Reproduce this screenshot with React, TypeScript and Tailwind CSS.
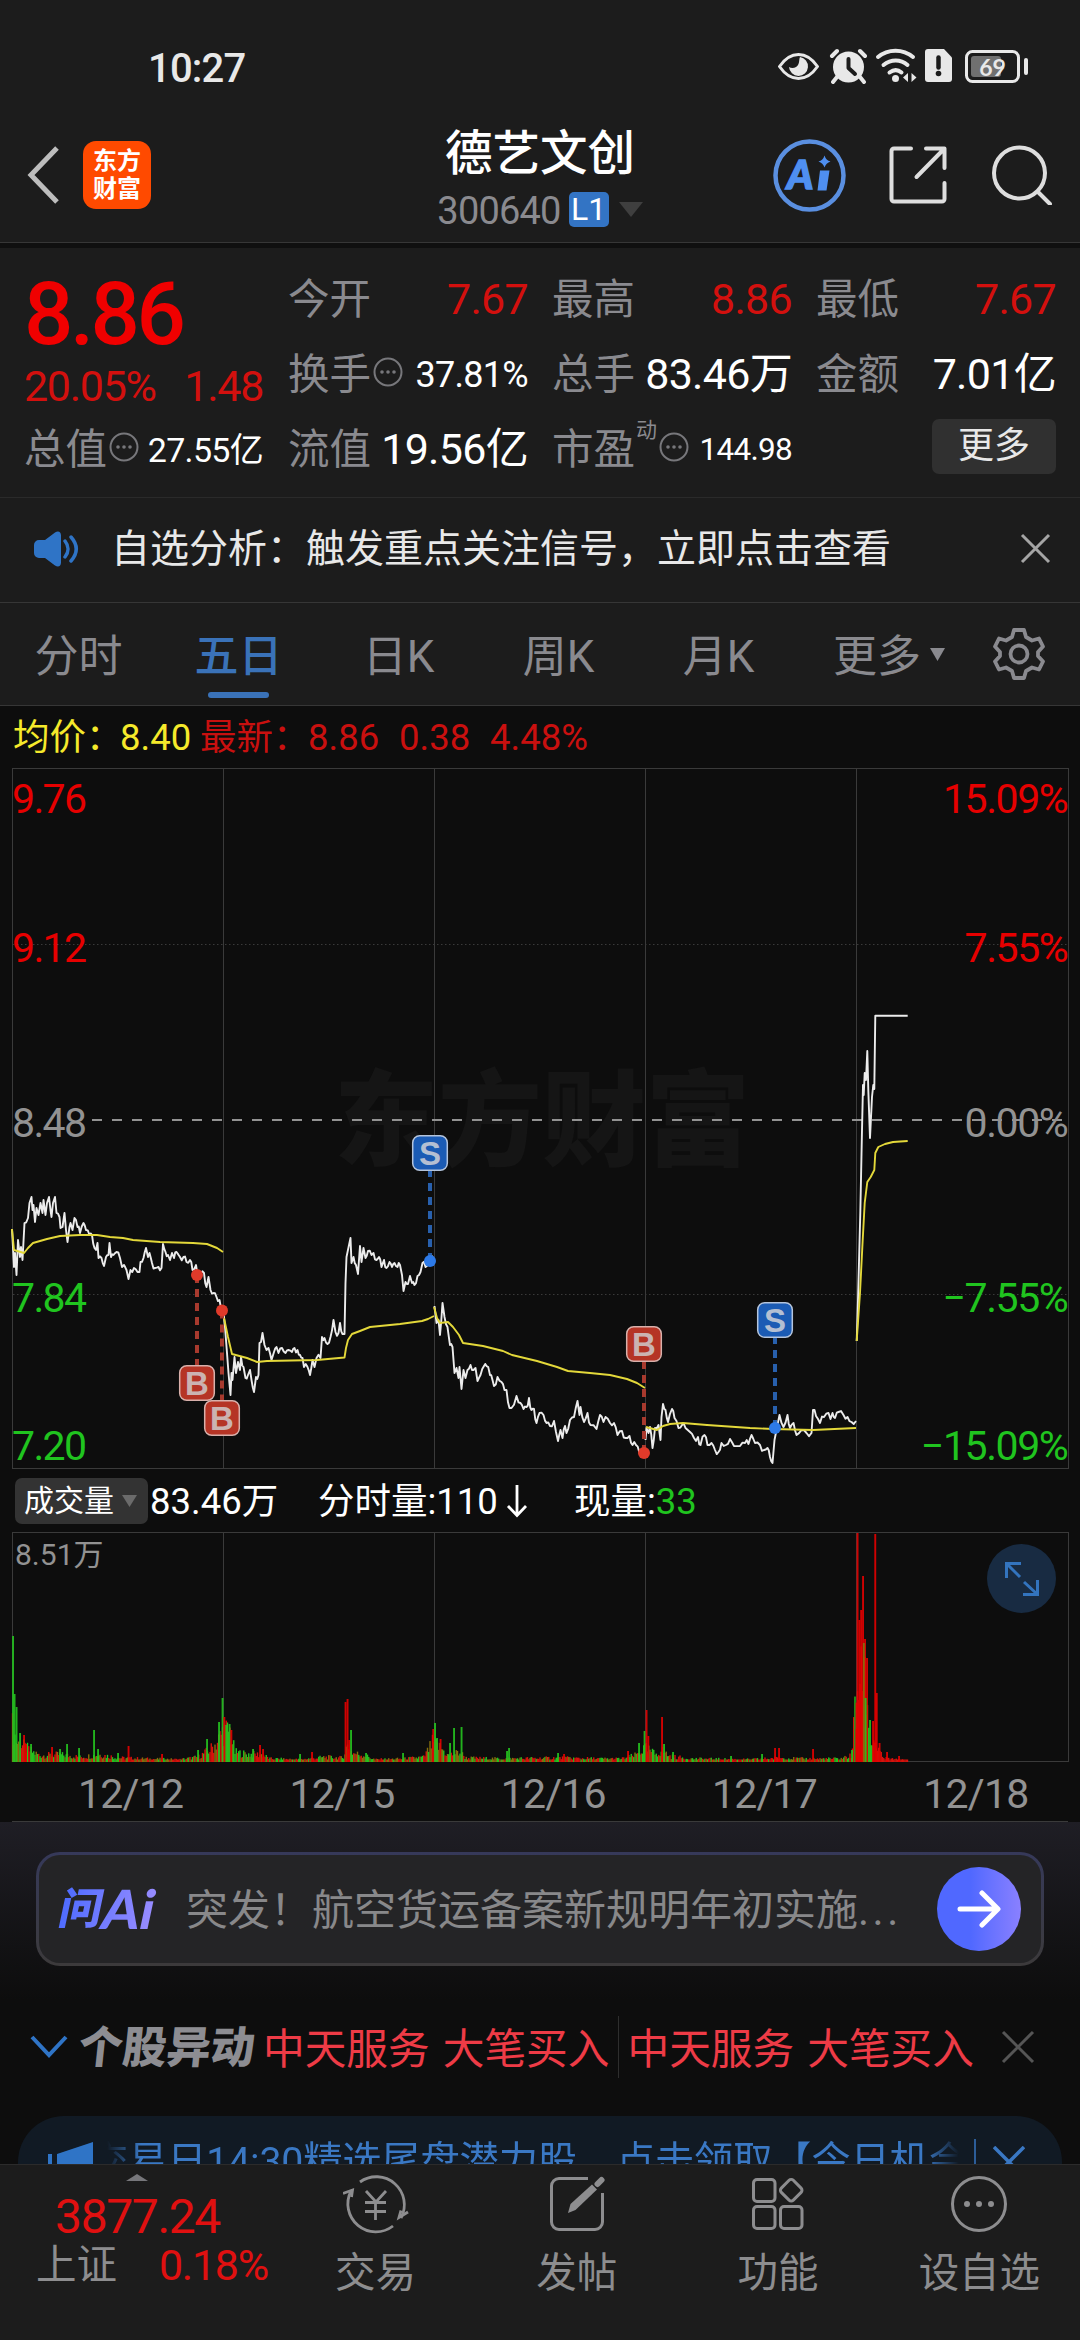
import { Fragment } from 'react';

const BORDER = '#3a3a3a';

// Intraday price, one "x,y x,y ..." list per trading day
const priceDays = [
  '12,1229 14,1267 15,1253 16.5,1275 18,1240 20,1257 21,1247 22.5,1260 24.5,1223 28,1218 29.5,1203 31.5,1197 32.5,1210 33.5,1205 35,1222 36.5,1208 38.5,1215 40.5,1203 42.5,1213 43.5,1200 45.5,1215 47,1203 49,1197 50.5,1210 51.5,1217 53,1203 55,1197 56.5,1213 59.5,1217 60.5,1228 62.5,1227 64.5,1213 66,1230 67.5,1242 69.5,1227 70.5,1223 72.5,1230 74.5,1218 77.5,1227 80,1233 83.5,1223 86,1230 89.5,1235 92,1235 94.5,1248 96,1250 97.5,1243 98.5,1258 101.5,1258 104,1266 106,1257 108.5,1255 109.5,1243 111,1257 113.5,1255 116.5,1252 120,1258 122,1267 124,1265 126.5,1270 128.5,1279 130.5,1270 134,1268 137.5,1272 139.5,1272 140.5,1262 143.5,1258 146,1248 148,1257 149.5,1253 152,1263 155,1268 158.5,1267 161.5,1268 163,1244 165.5,1252 168,1255 170,1260 172,1253 174,1258 176.5,1252 180,1257 183.5,1257 186.5,1262 190,1260 192.5,1270 196,1265 198.5,1275 201,1273 204,1273 206.5,1287 208.5,1277 210.5,1290 213.5,1293 216.5,1297 219.5,1300 222,1310',
  '223.5,1312 225,1327 227,1353 228.5,1373 230.5,1395 231.5,1373 232.5,1380 234.5,1357 236,1373 238,1362 240,1370 241,1357 243.5,1367 245.5,1378 248,1375 250,1370 251.5,1380 254,1392 256,1377 258.5,1375 259.5,1343 261,1342 262.5,1333 264.5,1345 266.5,1350 268.5,1348 271.5,1360 274,1352 276.5,1347 278.5,1353 282,1348 285.5,1353 288.5,1350 292,1352 294.5,1348 297.5,1350 300,1355 302.5,1358 304,1367 307.5,1367 310,1375 312.5,1360 314.5,1367 316.5,1358 320.5,1358 322,1337 324.5,1338 327.5,1344 330.5,1337 333.5,1320 335.5,1332 338.5,1333 340,1323 342.5,1334 344.5,1334 345.5,1283 346.5,1257 350.5,1238 351.5,1263 353.5,1257 356,1265 358,1274 360,1246 361.5,1262 363.5,1248 365.5,1258 368,1251 371.5,1255 373.5,1253 376.5,1260 379,1257 381.5,1267 384,1260 386.5,1268 389.5,1262 392,1267 394.5,1263 397.5,1267 400,1265 402,1275 403.5,1291 405.5,1282 408,1284 410,1276 412,1283 414.5,1285 417.5,1276 420.5,1272 422.5,1263 425.5,1267 430,1261 433,1256',
  '434.5,1306 436.5,1323 438.5,1320 440,1335 442.5,1303 444.5,1317 447.5,1327 450,1345 452.5,1347 454.5,1373 456.5,1368 458.5,1378 459.5,1367 461.5,1389 463.5,1370 465.5,1378 467.5,1370 470.5,1365 473.5,1370 475.5,1368 477.5,1381 480.5,1375 484,1366 486.5,1366 490,1375 492.5,1380 494,1386 497.5,1377 501.5,1382 504.5,1390 506.5,1390 509.5,1408 511.5,1408 516.5,1396 520.5,1403 523.5,1409 526.5,1407 529,1398 531.5,1410 534,1409 536.5,1423 539.5,1413 543.5,1415 546.5,1423 550,1426 554,1421 558,1441 560.5,1430 562.5,1438 565,1426 566.5,1433 570,1420 574,1417 577.5,1401 579.5,1415 580.5,1407 584,1422 587.5,1413 590.5,1425 596.5,1429 600,1415 603.5,1422 605.5,1417 610,1423 614,1423 617.5,1435 622,1431 625.5,1438 629.5,1436 632.5,1445 636,1445 639.5,1453 644,1453',
  '645.5,1440 646.5,1428 648.5,1433 650,1427 652.5,1448 655,1428 658.5,1425 660.5,1440 661.5,1417 663,1404 665.5,1410 668,1422 672,1409 674.5,1418 678.5,1428 682,1425 685.5,1428 690,1432 694,1438 698,1437 700.5,1445 704.5,1435 707.5,1445 711.5,1443 715,1450 718.5,1452 721.5,1443 726,1445 730,1439 734,1446 740,1446 745,1443 748.5,1444 751.5,1435 755,1443 760,1445 764,1450 767.5,1448 770,1457 772.5,1463 774.5,1440 776.5,1430 779.5,1415 783.5,1427 787.5,1415 790,1428 793.5,1423 796.5,1435 801.5,1430 806.5,1433 811.5,1433 813,1410 816,1416 820,1423 824,1417 828.5,1413 830.5,1419 832.5,1413 835,1418 838.5,1412 843.5,1415 847.5,1417 851.5,1422 856,1421',
  '856.7,1341 858,1300 860.3,1213 862,1130 863,1085 863.7,1095 864.7,1073 866,1080 867.3,1051 868.3,1090 870,1138 872,1097 873.3,1085 874.3,1089 875.3,1015.7 907.7,1015.7',
];

const averageDays = [
  '12,1229 14,1250 24,1253 28,1248 33,1243 47,1239 60,1236 80,1235 97,1235 110,1237 123,1238 133,1240 160,1242 193,1243 207,1244 217,1248 223,1252',
  '224,1318 228,1337 232,1354 247,1358 257,1362 267,1361 317,1360 344.5,1357.5 346,1348 348,1340 352,1334 360,1331 370,1327 400,1324 422,1321 428,1319 434,1316',
  '434,1307 437,1318 440,1323 448,1322 453,1327 459,1335 463,1343 483,1346 503,1351 512,1355 537,1361 557,1367 568,1371 590,1373 610,1375 627,1379 637,1383 645,1388',
  '646,1427 657,1430 663,1426 670,1424 683,1423 707,1425 750,1428 773,1429 813,1430 856,1428',
  '856.7,1341 860,1293 862.7,1240 864.7,1203 867.3,1182 870.7,1177 874.3,1170 875.3,1153 878.3,1147 885,1144 893,1142 907.7,1141',
];

const trades = [
  { type: 'B', x: 197, dot: 1275, box: 1383 },
  { type: 'B', x: 222, dot: 1310.5, box: 1418 },
  { type: 'S', x: 430, dot: 1261, box: 1153 },
  { type: 'B', x: 644, dot: 1453, box: 1344 },
  { type: 'S', x: 775, dot: 1428, box: 1320 },
];

// Typical bar height along the x axis, bars between the keys are interpolated
const volumeBase = [
  [12, 45], [17, 24], [24, 19], [30, 14], [40, 8], [60, 9], [80, 6], [100, 9], [120, 5], [145, 4],
  [180, 3], [198, 6], [210, 15], [217, 24], [223, 38], [230, 38], [235, 12], [245, 10], [262, 9],
  [270, 4], [300, 3], [325, 6], [343, 5], [347, 20], [353, 11], [365, 8], [375, 3], [405, 4], [424, 6],
  [433, 24], [442, 16], [448, 8], [460, 12], [466, 5], [500, 4], [560, 5], [600, 4], [622, 4],
  [635, 8], [645, 17], [655, 10], [662, 14], [670, 7], [690, 4], [750, 3], [780, 5], [800, 4],
  [840, 4], [852, 8], [857, 100], [866, 95], [870, 24], [874, 26], [878, 15], [883, 5], [895, 3], [908, 2],
];

const volumeSpikes: [number, number, string][] = [
  [13, 126, 'g'], [14.5, 68, 'g'], [16.5, 55, 'g'], [20, 29, 'g'], [24, 27, 'r'], [26, 18, 'r'], [31, 18, 'g'],
  [52, 15, 'r'], [60, 13, 'g'], [67, 18, 'g'], [79, 14, 'g'], [94, 32, 'g'], [98, 13, 'g'], [118, 9, 'g'],
  [128.5, 16, 'r'], [162, 8, 'r'], [198, 12, 'g'], [207, 23, 'g'], [219, 40, 'g'], [222.5, 64, 'g'],
  [224.3, 45, 'r'], [226.3, 37, 'g'], [229.5, 38, 'g'], [231.3, 32, 'r'], [253, 13, 'g'], [260, 17, 'r'],
  [263, 13, 'r'], [300, 8, 'g'], [312, 10, 'r'], [345.5, 60, 'r'], [347.5, 63, 'r'], [349.2, 22, 'r'],
  [351, 32, 'g'], [366, 9, 'g'], [403, 9, 'g'], [433.2, 33, 'r'], [435, 39, 'g'], [437, 24, 'g'],
  [440.5, 23, 'r'], [450, 19, 'g'], [454, 34, 'g'], [461.5, 35, 'g'], [507, 11, 'g'], [509, 14, 'g'],
  [558, 9, 'g'], [564, 8, 'r'], [628, 11, 'r'], [639, 19, 'g'], [644.5, 31, 'g'], [646.5, 52, 'r'],
  [648.3, 26, 'r'], [662, 45, 'r'], [664, 18, 'g'], [673, 10, 'g'], [731, 6, 'g'], [762, 8, 'g'],
  [775, 14, 'r'], [779, 14, 'r'], [813, 13, 'r'], [852, 12, 'g'], [856.5, 33, 'r'], [857.5, 229, 'r'],
  [859.3, 142, 'r'], [861.1, 152, 'r'], [863, 186, 'r'], [865, 123, 'r'], [867, 104, 'r'], [863.8, 119, 'o'],
  [865.6, 64, 'g'], [870, 42, 'g'], [873, 41, 'r'], [875.2, 228, 'r'], [876.7, 69, 'r'], [879.5, 19, 'r'],
  [887, 10, 'r'], [899, 6, 'r'],
];

const barColors: Record<string, string> = { r: '#e60000', g: '#25c41f', o: '#86700c' };

// deterministic noise, so the bars are the same on every render
const noise = (n: number) => {
  const v = Math.sin(n * 12.9898) * 43758.5453;
  return v - Math.floor(v);
};

const baseHeight = (x: number) => {
  for (let i = 1; i < volumeBase.length; i++) {
    const [x0, h0] = volumeBase[i - 1];
    const [x1, h1] = volumeBase[i];
    if (x <= x1) return h0 + ((h1 - h0) * (x - x0)) / (x1 - x0);
  }
  return 0;
};

const volumeBars = Array.from({ length: 717 }, (_, i) => {
  const x = 12.5 + i * 1.25;
  const today = x > 856;
  const h = Math.max(2.5, baseHeight(x) * (0.4 + noise(i + 1) * 0.8));
  const up = today ? !(x > 867 && x < 873) : noise(i + 500) > (x > 225 && x < 235 ? 0.7 : 0.55);
  return { x, h, color: up ? '#d8120c' : noise(i + 900) > 0.5 ? '#25c41f' : '#86700c' };
});

const roughen = (points: string, day: number) => {
  const list = points.split(' ').map((p) => p.split(',').map(Number));
  const out: string[] = [];
  list.forEach(([x, y], i) => {
    out.push(`${x},${y}`);
    const next = list[i + 1];
    if (next && day < 4 && next[0] - x >= 2.4) {
      const mx = (x + next[0]) / 2;
      out.push(`${mx},${(y + next[1]) / 2 + (noise(mx) - 0.5) * 7}`);
    }
  });
  return out.join(' ');
};

const StatusBar = () => (
  <div className="flex h-[108px] items-center pt-6 pl-[148px] pr-[52px] text-[#e8e8e8]">
    <span className="mt-[6px] text-[40px] font-medium leading-none tracking-[-0.800px]">10:27</span>
    <svg className="ml-auto" width="250" height="36" viewBox="778 48 250 36" fill="none">
      {/* eye */}
      <path d="M779.5 66.5C786 57 792 54.5 798.5 54.5S811 57 817.500 66.5C811 76 805 78.500 798.5 78.5S786 76 779.500 66.5Z" stroke="currentColor" strokeWidth="3" strokeLinejoin="round" />
      <path d="M800 57a9.500 9.500 0 1 1-11 10c3 2 8 1 9.500-3 1-3 .500-5 1.500-7Z" fill="currentColor" />
      {/* alarm */}
      <circle cx="848.5" cy="67" r="15.500" fill="currentColor" />
      <path d="M832 56l5-5M865 56l-5-5M837 77l-4 5M860 77l4 5" stroke="currentColor" strokeWidth="4" strokeLinecap="round" />
      <path d="M848.500 59v9l6.500 6" stroke="#1c1c1c" strokeWidth="4" strokeLinecap="round" strokeLinejoin="round" />
      {/* wifi */}
      <path d="M878 57c10-8.500 25-8.500 35 0M883.500 65c7.500-6 17-6 24 0M889.500 72.500c4-3 8.500-3 12 0" stroke="currentColor" strokeWidth="4" strokeLinecap="round" />
      <circle cx="895.500" cy="78.500" r="3.500" fill="currentColor" />
      <path d="M908 73v9l-5-4.500ZM911.500 82v-9l5 4.500Z" fill="currentColor" />
      {/* sim warning */}
      <path d="M928 49h16l8 8.500v21.500a3 3 0 0 1-3 3h-21a3 3 0 0 1-3-3V52a3 3 0 0 1 3-3Z" fill="currentColor" />
      <path d="M938.500 57.500v10" stroke="#1c1c1c" strokeWidth="4.500" strokeLinecap="round" />
      <circle cx="938.500" cy="73.500" r="2.800" fill="#1c1c1c" />
      {/* battery */}
      <rect x="966.500" y="51.500" width="52" height="30" rx="6" stroke="currentColor" strokeWidth="3" />
      <rect x="971" y="56" width="30" height="21" rx="3" fill="#707070" />
      <text x="992.500" y="75.500" textAnchor="middle" fontSize="23" fill="currentColor" className="font-['Lato',sans-serif] font-bold">69</text>
      <path d="M1026 60v13" stroke="currentColor" strokeWidth="4" strokeLinecap="round" />
    </svg>
  </div>
);

const TitleBar = () => (
  <div className="flex h-[134px] items-center pl-[26px] pr-[28px]">
    <svg width="34" height="58" viewBox="0 0 34 58" fill="none" stroke="#bdbdbd" strokeWidth="5">
      <path d="M31 2 5 29l26 27" />
    </svg>
    <div className="ml-[23px] flex h-[68px] w-[68px] flex-col items-center justify-center rounded-[13px] bg-[#ff4a00] text-[24px] font-bold leading-[28px] text-white">
      <span>东方</span>
      <span>财富</span>
    </div>
    <div className="ml-[286px] flex w-[206px] flex-col items-center">
      <h1 className="pt-[2px] text-[47.500px] font-medium leading-[56px] text-white">德艺文创</h1>
      <div className="mt-[6px] -mb-[4px] flex h-[42px] items-center">
        <span className="pt-[3px] text-[38px] leading-none tracking-[-0.8px] text-[#8a8a8f]">300640</span>
        <span className="ml-[8px] flex h-[35px] w-[40px] items-center justify-center rounded-[5px] bg-[#3374c4] text-[32px] leading-none text-white">L1</span>
        <svg className="ml-[10px]" width="24" height="15" viewBox="0 0 24 15">
          <path d="M0 0h24L12 15Z" fill="#3f3f3f" />
        </svg>
      </div>
    </div>
    <svg className="ml-auto" width="73" height="73" viewBox="0 0 73 73" fill="none">
      <circle cx="36.500" cy="36.500" r="34" stroke="#5a8fe0" strokeWidth="4.500" />
      <text x="14" y="50" fontSize="40" fill="#4f8ff0" stroke="#4f8ff0" strokeWidth="1.500" className="font-['Lato',sans-serif] font-black italic">A</text>
      <path d="M47 31.500h9.500l-3 20H44.500Z" fill="#4f8ff0" />
      <path d="M51.500 16.500q1.500 5 6 6-4.500 1.500-6 6-1.500-4.500-6-6 4.500-1 6-6Z" fill="#4f8ff0" />
    </svg>
    <svg className="ml-[43px]" width="58" height="58" viewBox="0 0 58 58" fill="none" stroke="#dedede" strokeWidth="4" strokeLinecap="round" strokeLinejoin="round">
      <path d="M22 2.500H5A2.500 2.500 0 0 0 2.500 5v48A2.500 2.500 0 0 0 5 55.500h48a2.500 2.500 0 0 0 2.500-2.500V37M37 2.500h18.500V22M55 3 27.500 31" />
    </svg>
    <svg className="ml-[45px]" width="60" height="60" viewBox="0 0 60 60" fill="none" stroke="#dedede" strokeWidth="4" strokeLinecap="round">
      <circle cx="27.500" cy="28" r="25.500" />
      <path d="m46 47 12 12" />
    </svg>
  </div>
);

const InfoDot = () => (
  <svg className="shrink-0" width="30" height="30" viewBox="0 0 30 30" fill="#77777b">
    <circle cx="15" cy="15" r="13.500" fill="none" stroke="#77777b" strokeWidth="2" />
    <circle cx="9" cy="15" r="1.800" />
    <circle cx="15" cy="15" r="1.800" />
    <circle cx="21" cy="15" r="1.800" />
  </svg>
);

interface StatProps {
  label: string;
  value: string;
  size?: string;
  color?: string;
  info?: boolean;
  sup?: string;
}

const Stat = ({ label, value, size = 'text-[43px]', color = 'text-white', info, sup }: StatProps) => (
  <div className="flex h-[75px] items-center">
    <span className="shrink-0 text-[41.500px] leading-none text-[#8a8a8f]">{label}</span>
    {sup && <span className="mb-[38px] ml-[1px] text-[21px] leading-none text-[#8a8a8f]">{sup}</span>}
    {info && <span className="ml-[2px] -mt-[6px]"><InfoDot /></span>}
    <span className={`ml-auto whitespace-nowrap leading-none tracking-[-0.7px] ${size} ${color}`}>{value}</span>
  </div>
);

const QuotePanel = () => (
  <div className="flex h-[254px] border-t-[5px] border-[#0f0f0f] pl-[24px] pr-[24px] pt-[14px]">
    <div className="w-[239px]">
      <div className="flex h-[92px] items-center pt-[12px]">
        <span className="text-[87px] font-medium leading-none tracking-[-3.500px] text-[#f00000]">8.86</span>
      </div>
      <div className="flex h-[58px] items-center justify-between pt-[6px] text-[43px] leading-none tracking-[-1.300px] text-[#d3100e]">
        <span>20.05%</span>
        <span>1.48</span>
      </div>
      <Stat label="总值" value="27.55亿" size="text-[34px]" info />
    </div>
    <div className="ml-[25px] w-[240px]">
      <Stat label="今开" value="7.67" color="text-[#d3100e]" />
      <Stat label="换手" value="37.81%" size="text-[36px]" info />
      <Stat label="流值" value="19.56亿" />
    </div>
    <div className="ml-[24px] w-[240px]">
      <Stat label="最高" value="8.86" color="text-[#d3100e]" />
      <Stat label="总手" value="83.46万" />
      <Stat label="市盈" value="144.98" size="text-[31.500px]" sup="动" info />
    </div>
    <div className="ml-[24px] w-[240px]">
      <Stat label="最低" value="7.67" color="text-[#d3100e]" />
      <Stat label="金额" value="7.01亿" />
      <div className="flex h-[75px] items-center justify-end pb-[6px]">
        <button className="h-[55px] w-[124px] rounded-[7px] bg-[#303030] pb-[2px] text-[36px] leading-none text-[#e8e8e8]">更多</button>
      </div>
    </div>
  </div>
);

const NoticeBar = () => (
  <div className="flex h-[105px] items-center border-t border-[#2a2a2a] pb-[3px] pl-[34px] pr-[29px]">
    <svg width="46" height="36" viewBox="0 0 46 36" fill="none">
      <path d="M0 14a5 5 0 0 1 5-5h6L21 1.500c3-2 6-1 6 3v27c0 4-3 5-6 3L11 27H5a5 5 0 0 1-5-5Z" fill="#2f74c6" />
      <path d="M31 10c4 5 4 11 0 16M37 6c7 8 7 16 0 24" stroke="#2f74c6" strokeWidth="3.500" strokeLinecap="round" />
    </svg>
    <span className="ml-[31px] pt-[2px] text-[39px] leading-none text-[#e8e8e8]">自选分析：触发重点关注信号，立即点击查看</span>
    <svg className="ml-auto" width="31" height="31" viewBox="0 0 31 31" stroke="#a5a5a5" strokeWidth="3">
      <path d="m2 2 27 27M29 2 2 29" />
    </svg>
  </div>
);

const tabs = ['分时', '五日', '日K', '周K', '月K'];

const ChartTabs = () => (
  <div className="flex h-[104px] items-center border-y border-[#363636] text-[#8a8a8f]">
    <div className="flex">
      {tabs.map((tab) => (
        <div key={tab} className={`relative flex h-[104px] w-[160px] items-center justify-center pt-[6px] pr-[3px] text-[44px] leading-none ${tab === '五日' ? 'font-medium text-[#3a72b8]' : ''}`}>
          {tab}
          {tab === '五日' && <span className="absolute bottom-[8px] left-[48px] h-[6px] w-[61px] rounded-full bg-[#3a72b8]" />}
        </div>
      ))}
    </div>
    <div className="ml-[33px] flex items-center pt-[6px]">
      <span className="text-[44px] leading-none">更多</span>
      <svg className="mb-[6px] ml-[9px]" width="15" height="13" viewBox="0 0 15 13">
        <path d="M0 0h15L7.500 13Z" fill="#8a8a8f" />
      </svg>
    </div>
    <svg className="ml-auto mr-[35px]" width="52" height="54" viewBox="0 0 52 54" fill="none" stroke="#8a8a8f" strokeWidth="3.800" strokeLinejoin="round">
      <path d="M21 3h10l2 7 6 3.500 7-2 4 8-5 5.500v4l5 5.500-4 8-7-2L33 44l-2 7H21l-2-7-6-3.500-7 2-4-8L7 29v-4l-5-5.500 4-8 7 2L19 10Z" />
      <circle cx="26" cy="27" r="8.500" />
    </svg>
  </div>
);

const PriceSummary = () => (
  <div className="flex h-[62px] items-center whitespace-nowrap pl-[13px] pt-[3px] text-[36.500px] leading-none text-[#c9100f]">
    <span className="w-[107px] text-[#f5e92b]">均价：</span>
    <span className="w-[80px] text-[#f5e92b]">8.40</span>
    <span className="w-[108px]">最新：</span>
    <span className="w-[91px]">8.86</span>
    <span className="w-[91px]">0.38</span>
    <span>4.48%</span>
  </div>
);

const axisLabels = [
  { y: 813, left: '9.76', right: '15.09%', color: '#e60000' },
  { y: 962, left: '9.12', right: '7.55%', color: '#e60000' },
  { y: 1137, left: '8.48', right: '0.00%', color: '#929292' },
  { y: 1312, left: '7.84', right: '−7.55%', color: '#20c41f' },
  { y: 1460, left: '7.20', right: '−15.09%', color: '#20c41f' },
];

const PriceChart = () => (
  <svg className="block" width="1080" height="702" viewBox="0 768 1080 702" fill="none">
    <text x="334" y="1158" fontSize="104" fill="#151515" className="font-['Noto_Sans_CJK_SC',sans-serif] font-black">东方财富</text>
    <g stroke={BORDER}>
      <rect x="12.500" y="768.500" width="1056" height="700" />
      <path d="M223.500 768v701M434.500 768v701M645.500 768v701M856.500 768v701" />
      <path d="M13 944.500h1055M13 1294.500h1055" strokeDasharray="1.500 2.500" />
    </g>
    <path d="M92 1120h976" stroke="#929292" strokeWidth="2" strokeDasharray="10 10" />
    {axisLabels.map((l) => (
      <g key={l.y} fill={l.color} fontSize="41">
        <text x="12" y={l.y} textLength="75" lengthAdjust="spacing">{l.left}</text>
        <text x="1067.500" y={l.y} textAnchor="end" letterSpacing="-1.400">{l.right}</text>
      </g>
    ))}
    {priceDays.map((points, i) => (
      <polyline key={i} points={roughen(points, i)} stroke="#ececec" strokeWidth="1.900" strokeLinejoin="round" />
    ))}
    {averageDays.map((points, i) => (
      <polyline key={i} points={points} stroke="#e3d83a" strokeWidth="1.900" strokeLinejoin="round" />
    ))}
    {trades.map((t) => {
      const sell = t.type === 'S';
      const edge = t.box < t.dot ? t.box + 18 : t.box - 18;
      return (
        <Fragment key={t.x}>
          <path d={`M${t.x} ${t.dot}V${edge}`} stroke={sell ? '#2860ad' : '#a83a2e'} strokeWidth="4" strokeDasharray="8 6" />
          <circle cx={t.x} cy={t.dot} r="6" fill={sell ? '#2d7ae8' : '#e03a2a'} />
          <rect x={t.x - 17.3} y={t.box - 17.3} width="34.600" height="34.600" rx="7" fill={sell ? '#1b5bb4' : '#b53425'} stroke={sell ? '#b4c4dc' : '#d8b0ab'} strokeWidth="1.500" />
          <text x={t.x} y={t.box + 11.5} textAnchor="middle" fontSize="33" fill={sell ? '#b4bfd2' : '#cbb3b1'} className="font-['Liberation_Sans',sans-serif] font-bold">{t.type}</text>
        </Fragment>
      );
    })}
  </svg>
);

const VolumeHeader = () => (
  <div className="flex h-[62px] items-center whitespace-nowrap pl-[15px] text-[36.500px] leading-none text-white">
    <div className="flex h-[46px] w-[133px] items-center rounded-[7px] bg-[#333333] pl-[9px] text-[30px]">
      成交量
      <svg className="ml-[8px]" width="15" height="12" viewBox="0 0 15 12">
        <path d="M0 0h15L7.500 12Z" fill="#6b6b6b" />
      </svg>
    </div>
    <span className="ml-[2px] w-[168px] pt-[2px]">83.46万</span>
    <span className="pt-[2px]">分时量:110</span>
    <svg className="ml-[8px]" width="22" height="34" viewBox="0 0 22 34" fill="none" stroke="#ffffff" strokeWidth="2.800">
      <path d="M11 1v30M2 22l9 9.500 9-9.500" />
    </svg>
    <span className="ml-[46px] pt-[2px]">现量:<span className="text-[#20c41f]">33</span></span>
  </div>
);

const VolumeChart = () => (
  <div className="relative">
    <svg className="block" width="1080" height="230" viewBox="0 1532 1080 230" fill="none">
      <g stroke={BORDER}>
        <rect x="12.500" y="1532.500" width="1056" height="229" />
        <path d="M223.500 1532v230M434.500 1532v230M645.500 1532v230M856.500 1532v230" />
      </g>
      {volumeBars.map((b) => (
        <rect key={b.x} x={b.x - 0.7} y={1762 - b.h} width="1.400" height={b.h} fill={b.color} />
      ))}
      {volumeSpikes.map(([x, h, c]) => (
        <rect key={x} x={x - 0.9} y={1762 - h} width="1.900" height={h} fill={barColors[c]} fillOpacity="0.900" />
      ))}
      <text x="15" y="1564.500" fontSize="30" fill="#929292">8.51万</text>
    </svg>
    <button className="absolute left-[987px] top-[12px] flex h-[69px] w-[69px] items-center justify-center rounded-full bg-[#182b42]">
      <svg width="34" height="34" viewBox="0 0 34 34" fill="none" stroke="#3374be" strokeWidth="3">
        <path d="M16 1.500H1.500V16M2 2l13 13M32.500 18v14.500H18M32 32 19 20" />
      </svg>
    </button>
  </div>
);

const DateAxis = () => (
  <div className="mx-[12px] flex h-[60px] items-center border-b border-[#3a3a3a] pl-[13px] pt-[5px] text-[41px] leading-none tracking-[-0.8px] text-[#929292]">
    {['12/12', '12/15', '12/16', '12/17', '12/18'].map((d) => (
      <span key={d} className="w-[211.300px] shrink-0 text-center">{d}</span>
    ))}
  </div>
);

const AskAi = () => (
  <div className="h-[178px] bg-linear-to-b from-[#1f1e25] to-[#0d0d0d] px-[36px] pt-[30px]">
    <div className="h-[114px] rounded-[24px] bg-linear-to-b from-[#36395a] to-[#3c3a3b] p-[3px]">
      <div className="flex h-full items-center rounded-[21px] bg-[#242426] pl-[21px] pr-[20px]">
        <div className="flex w-[104px] -skew-x-12 items-center bg-linear-to-r from-[#4d6bff] to-[#a08fff] bg-clip-text text-transparent">
          <span className="text-[43px] font-black leading-[50px]">问</span>
          <span className="font-['Lato',sans-serif] text-[54px] font-black leading-[50px]">Ai</span>
        </div>
        <span className="ml-[22px] whitespace-nowrap pt-[4px] text-[42px] leading-none text-[#88888a]">
          突发！航空货运备案新规明年初实施<span className="tracking-[3.500px]">...</span>
        </span>
        <div className="ml-auto flex h-[84px] w-[84px] shrink-0 items-center justify-center rounded-full bg-linear-to-r from-[#5068ff] from-40% to-[#8a80ff]">
          <svg width="44" height="38" viewBox="0 0 44 38" fill="none" stroke="#ffffff" strokeWidth="5" strokeLinecap="round" strokeLinejoin="round">
            <path d="M3 19h37M25 3l16 16-16 16" />
          </svg>
        </div>
      </div>
    </div>
  </div>
);

const Movers = () => (
  <div className="flex h-[116px] items-center whitespace-nowrap pl-[30px] pr-[45px] pb-[22px] text-[41.700px] leading-none text-[#ee3b46]">
    <svg width="38" height="24" viewBox="0 0 38 24" fill="none" stroke="#2f74c6" strokeWidth="4">
      <path d="m2 2 17 18L36 2" />
    </svg>
    <span className="ml-[11px] w-[181px] -skew-x-6 pt-[2px] text-[44px] font-black text-[#8d8d92]">个股异动</span>
    <span className="ml-[3px] pt-[5px]">中天服务</span>
    <span className="ml-[13px] pt-[5px]">大笔买入</span>
    <span className="ml-[8px] h-[62px] w-px bg-[#2e2e2e]" />
    <span className="ml-[9px] pt-[5px]">中天服务</span>
    <span className="ml-[13px] pt-[5px]">大笔买入</span>
    <svg className="ml-auto" width="34" height="34" viewBox="0 0 34 34" stroke="#555555" strokeWidth="3">
      <path d="m2 2 30 30M32 2 2 32" />
    </svg>
  </div>
);

const PromoBanner = () => (
  <div className="h-[48px] overflow-hidden px-[18px]">
    <div className="flex h-[92px] items-center rounded-[46px] bg-[#111a24] pl-[30px] pr-[37px]">
      <svg className="shrink-0" width="46" height="40" viewBox="0 0 46 40" fill="#2f74c6">
        <path d="M0 12h4v18H0ZM9 12 45 0v40L9 30Z" />
      </svg>
      <div className="ml-[13px] w-[852px] overflow-hidden mask-x-from-96%">
        <span className="-ml-[18px] whitespace-nowrap text-[39.300px] leading-[48px] tracking-[-0.200px] text-[#3a78c4]">交易日14:30精选尾盘潜力股，点击领取【今日机会】</span>
      </div>
      <span className="ml-[15px] h-[46px] w-[2px] shrink-0 bg-[#2c5d98]" />
      <svg className="ml-auto shrink-0" width="32" height="32" viewBox="0 0 32 32" stroke="#3a78c4" strokeWidth="3.500">
        <path d="m1 1 30 30M31 1 1 31" />
      </svg>
    </div>
  </div>
);

const TradeIcon = () => (
  <svg width="66" height="60" viewBox="0 0 66 60" fill="none" stroke="currentColor" strokeWidth="2.800">
    <path d="M17 8a28 28 0 0 1 41 36M50 52A28 28 0 0 1 8 17" />
    <path d="M0 19.500 9.500 16l-1 7M65 38l-9 5.500 2-7" />
    <path d="m23 17 10 11 10-11M22 28.500h21M22 37.500h21M32.500 27v19" />
  </svg>
);

const PostIcon = () => (
  <svg width="56" height="56" viewBox="0 0 56 56" fill="none" stroke="currentColor" strokeWidth="3">
    <path d="M39 2.500H10A7.500 7.500 0 0 0 2.500 10v36a7.500 7.500 0 0 0 7.500 7.500h36a7.500 7.500 0 0 0 7.500-7.500V17" />
    <path d="m19 37 2.500-9L43 8.500l5 5L26.500 34Z" fill="currentColor" stroke="none" />
    <path d="m48.500 8 4-4" strokeWidth="6" strokeLinecap="round" />
  </svg>
);

const AppsIcon = () => (
  <svg width="54" height="56" viewBox="0 0 54 56" fill="none" stroke="currentColor" strokeWidth="3" strokeLinejoin="round">
    <rect x="2.500" y="3.500" width="21.500" height="22" rx="3.500" />
    <rect x="2.500" y="30.500" width="21.500" height="22" rx="3.500" />
    <rect x="29.500" y="30.500" width="21.500" height="22" rx="3.500" />
    <rect x="31.700" y="5.700" width="17" height="17" rx="3" transform="rotate(45 40.200 14.200)" />
  </svg>
);

const MoreIcon = () => (
  <svg width="58" height="58" viewBox="0 0 58 58" fill="currentColor">
    <circle cx="29" cy="29" r="26.500" fill="none" stroke="currentColor" strokeWidth="3" />
    <circle cx="17" cy="29" r="3" />
    <circle cx="29" cy="29" r="3" />
    <circle cx="41" cy="29" r="3" />
  </svg>
);

const navItems = [
  { label: '交易', Icon: TradeIcon },
  { label: '发帖', Icon: PostIcon },
  { label: '功能', Icon: AppsIcon },
  { label: '设自选', Icon: MoreIcon },
];

const BottomBar = () => (
  <div className="flex h-[176px] border-t border-[#2b2b2b] bg-[#1c1c1c]">
    <div className="flex w-[275px] flex-col items-center">
      <svg className="mt-[9px]" width="22" height="7" viewBox="0 0 22 7">
        <path d="M0 7h22L11 0Z" fill="#77777b" />
      </svg>
      <span className="mt-[11px] text-[48px] leading-[50px] tracking-[-1.400px] text-[#e01010]">3877.24</span>
      <div className="flex w-full items-center pl-[36px] leading-[46px]">
        <span className="text-[40.500px] text-[#8d8d8f]">上证</span>
        <span className="ml-[42px] text-[43px] tracking-[-1.300px] text-[#e01010]">0.18%</span>
      </div>
    </div>
    {navItems.map(({ label, Icon }) => (
      <div key={label} className="flex w-[201.300px] flex-col items-center pt-[9px] text-[#8d8d8f]">
        <div className="flex h-[60px] items-center">
          <Icon />
        </div>
        <span className="mt-[17px] text-[40.500px] leading-[44px]">{label}</span>
      </div>
    ))}
  </div>
);

const App = () => (
  <div className="flex h-[2340px] w-[1080px] flex-col overflow-hidden bg-[#0d0d0d] font-['Roboto','Noto_Sans_CJK_SC',sans-serif]">
    <div className="bg-[#1c1c1c]">
      <StatusBar />
      <div className="border-b border-[#363636]">
        <TitleBar />
      </div>
      <QuotePanel />
      <NoticeBar />
      <ChartTabs />
    </div>
    <PriceSummary />
    <PriceChart />
    <VolumeHeader />
    <VolumeChart />
    <DateAxis />
    <AskAi />
    <Movers />
    <PromoBanner />
    <BottomBar />
  </div>
);

export default App;
